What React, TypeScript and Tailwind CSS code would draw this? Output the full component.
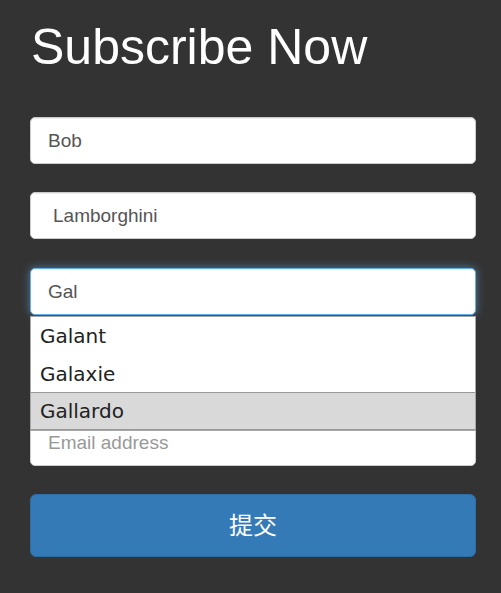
import React from "react";

export default function App() {
  const inputBase =
    "block w-full h-[47px] rounded-[5px] bg-white px-[17px] text-[19px] text-[#555] outline-none";
  const font = { fontFamily: '"Liberation Sans", Arial, sans-serif' };
  return (
    <div className="w-[501px] h-[593px] bg-[#333333] pl-[30px] pr-[25px] overflow-hidden" style={font}>
      <h1 className="pt-[20px] pl-[1px] text-[50px] leading-[55px] text-white font-normal">
        Subscribe Now
      </h1>
      <div className="mt-[42px]">
        <input
          className={`${inputBase} border border-[#cccccc] shadow-[inset_0_1px_1px_rgba(0,0,0,0.075)]`}
          defaultValue="Bob"
          readOnly
          style={font}
        />
      </div>
      <div className="mt-[28px]">
        <input
          className={`${inputBase} pl-[22px] border border-[#cccccc] shadow-[inset_0_1px_1px_rgba(0,0,0,0.075)]`}
          defaultValue="Lamborghini"
          readOnly
          style={font}
        />
      </div>
      <div className="mt-[29px] relative">
        <input
          className={`${inputBase} border border-[#66afe9] shadow-[inset_0_1px_1px_rgba(0,0,0,0.075),0_0_8px_rgba(102,175,233,0.6)]`}
          defaultValue="Gal"
          readOnly
          style={font}
        />
        <div
          className="absolute left-0 right-0 top-[48px] z-10 bg-white border border-[#a6a6a6] text-[20px] text-[#222]"
          style={{ fontFamily: '"DejaVu Sans", sans-serif' }}
        >
          <div className="h-[38px] flex items-center pl-[9px]">Galant</div>
          <div className="h-[37px] flex items-center pl-[9px]">Galaxie</div>
          <div className="h-[38px] flex items-center pl-[9px] bg-[#d9d9d9] border-t border-b border-[#999999]">
            Gallardo
          </div>
        </div>
      </div>
      <div className="mt-[104px]">
        <input
          className={`${inputBase} border border-[#cccccc] shadow-[inset_0_1px_1px_rgba(0,0,0,0.075)] placeholder:text-[#999]`}
          placeholder="Email address"
          readOnly
          style={font}
        />
      </div>
      <button
        className="mt-[28px] w-full h-[63px] rounded-[6px] bg-[#337ab7] border border-[#2e6da4] text-white text-[24px]"
        style={{ fontFamily: '"Liberation Sans", "Noto Sans CJK SC", sans-serif' }}
      >
        提交
      </button>
    </div>
  );
}
